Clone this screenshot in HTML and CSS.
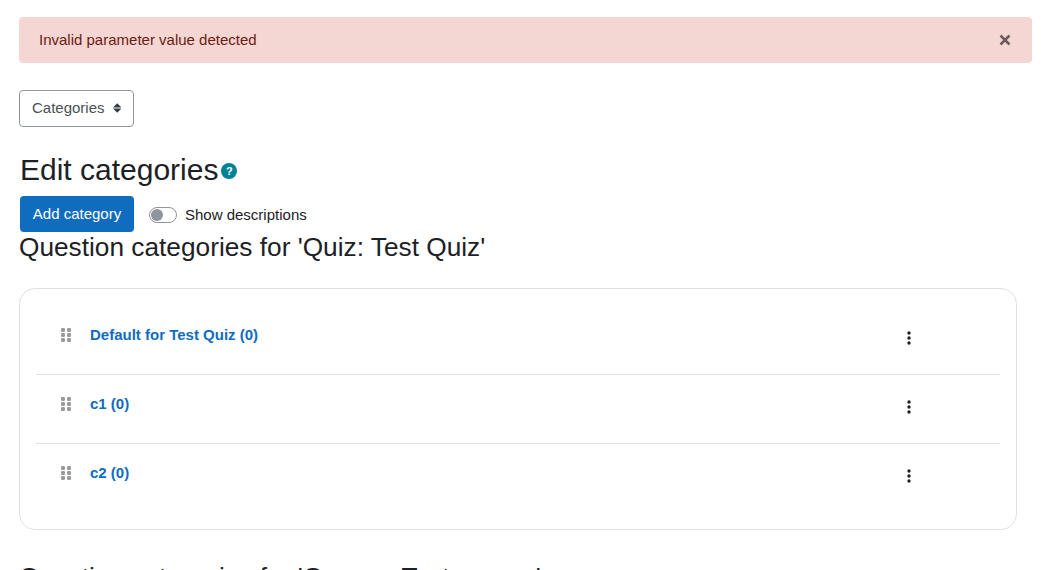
FILE: index.html
```html
<!DOCTYPE html>
<html lang="en">
<head>
<meta charset="utf-8">
<title>Edit categories</title>
<link rel="stylesheet" href="styles.css">
</head>
<body>
<main class="page">
  <div class="alert">
    <span>Invalid parameter value detected</span>
    <svg class="alert-close" width="12" height="12" viewBox="0 0 12 12"><path d="M1.5 1.5l9 9M10.500 1.500l-9 9"/></svg>
  </div>
  <button class="select" type="button">
    <span>Categories</span>
    <svg class="select-caret" width="9" height="12" viewBox="0 0 9 12"><path d="M4.500 1L9 5.500H0zM4.500 11L0 6.500h9z"/></svg>
  </button>
  <div class="title-row">
    <h2 class="title">Edit categories</h2>
    <span class="help">?</span>
  </div>
  <div class="actions">
    <button class="primary" type="button">Add category</button>
    <span class="toggle"><span class="toggle-knob"></span></span>
    <span class="toggle-label">Show descriptions</span>
  </div>
  <h3 class="section-title">Question categories for 'Quiz: Test Quiz'</h3>
  <section class="card">
    <div class="row">
      <svg class="grip" width="11" height="14" viewBox="0 0 11 14"><g><rect x="0" y="0" width="4" height="4" rx="1.200"/><rect x="6" y="0" width="4" height="4" rx="1.200"/><rect x="0" y="5" width="4" height="4" rx="1.200"/><rect x="6" y="5" width="4" height="4" rx="1.200"/><rect x="0" y="10" width="4" height="4" rx="1.200"/><rect x="6" y="10" width="4" height="4" rx="1.200"/></g></svg>
      <a class="row-link" href="#">Default for Test Quiz (0)</a>
      <svg class="kebab" width="4" height="14" viewBox="0 0 4 14"><circle cx="2" cy="2" r="1.700"/><circle cx="2" cy="7" r="1.700"/><circle cx="2" cy="12" r="1.700"/></svg>
    </div>
    <div class="row">
      <svg class="grip" width="11" height="14" viewBox="0 0 11 14"><g><rect x="0" y="0" width="4" height="4" rx="1.200"/><rect x="6" y="0" width="4" height="4" rx="1.200"/><rect x="0" y="5" width="4" height="4" rx="1.200"/><rect x="6" y="5" width="4" height="4" rx="1.200"/><rect x="0" y="10" width="4" height="4" rx="1.200"/><rect x="6" y="10" width="4" height="4" rx="1.200"/></g></svg>
      <a class="row-link" href="#">c1 (0)</a>
      <svg class="kebab" width="4" height="14" viewBox="0 0 4 14"><circle cx="2" cy="2" r="1.700"/><circle cx="2" cy="7" r="1.700"/><circle cx="2" cy="12" r="1.700"/></svg>
    </div>
    <div class="row">
      <svg class="grip" width="11" height="14" viewBox="0 0 11 14"><g><rect x="0" y="0" width="4" height="4" rx="1.200"/><rect x="6" y="0" width="4" height="4" rx="1.200"/><rect x="0" y="5" width="4" height="4" rx="1.200"/><rect x="6" y="5" width="4" height="4" rx="1.200"/><rect x="0" y="10" width="4" height="4" rx="1.200"/><rect x="6" y="10" width="4" height="4" rx="1.200"/></g></svg>
      <a class="row-link" href="#">c2 (0)</a>
      <svg class="kebab" width="4" height="14" viewBox="0 0 4 14"><circle cx="2" cy="2" r="1.700"/><circle cx="2" cy="7" r="1.700"/><circle cx="2" cy="12" r="1.700"/></svg>
    </div>
  </section>
  <h3 class="section-title section-next">Question categories for 'Course: Test course'</h3>
</main>
</body>
</html>
```

FILE: styles.css
```css
* { box-sizing: border-box; }
html, body { margin: 0; height: 570px; overflow: hidden; background: #fff; }
body { font-family: "Liberation Sans", Arial, sans-serif; color: #1d2125; }
.page { display: flex; flex-direction: column; align-items: flex-start; padding: 17px 10px 0 19px; }

.alert { width: 100%; height: 46px; display: flex; align-items: center; justify-content: space-between; padding: 0 21px 0 20px; background: #f4d6d2; border-radius: 4px; color: #6e1a12; font-size: 15px; }
.alert span { margin-bottom: 2px; }
.alert-close { stroke: #6d5a58; stroke-width: 2.500; fill: none; }

.select { margin-top: 27px; width: 115px; height: 37px; display: flex; align-items: center; gap: 8px; padding: 0 12px 2px; background: #fff; border: 1px solid #8f959e; border-radius: 4px; color: #495057; font: 15px "Liberation Sans", Arial, sans-serif; }
.select-caret { fill: #343a40; }

.title-row { margin-top: 26px; margin-left: 1px; display: flex; align-items: center; gap: 3px; height: 34px; }
.title { margin: 0; font-size: 30px; font-weight: 400; line-height: 34px; }
.help { width: 16px; height: 16px; margin-top: 1px; border-radius: 50%; background: #008196; color: #fff; font-size: 11px; font-weight: 700; line-height: 16px; text-align: center; }

.actions { margin-top: 9px; margin-left: 1px; display: flex; align-items: center; height: 36px; }
.primary { width: 114px; height: 36px; padding: 0 0 1px; background: #0f6cbf; border: 0; border-radius: 4px; color: #fff; font: 15px "Liberation Sans", Arial, sans-serif; }
.toggle { margin-left: 15px; margin-top: 2px; width: 28px; height: 16px; display: flex; align-items: center; padding-left: 1px; border: 1px solid #8f959e; border-radius: 8px; background: #fff; }
.toggle-knob { width: 12px; height: 12px; border-radius: 50%; background: #8f959e; }
.toggle-label { margin-left: 8px; margin-top: 1px; font-size: 15px; }

.section-title { margin: 0; font-size: 26.250px; font-weight: 400; line-height: 30px; }
.card { margin-top: 26px; width: 998px; height: 242px; padding: 16px 16px 16px; border: 1px solid #dee2e6; border-radius: 16px; }
.row { height: 69px; display: flex; align-items: flex-start; border-bottom: 1px solid #dee2e6; }
.row:first-child { height: 70px; }
.row:last-child { border-bottom: 0; }
.grip { margin: 23px 0 0 25px; fill: #9a9a9a; flex: none; }
.row-link { margin: 21px 0 0 18px; flex: 1; font-size: 15px; font-weight: 700; line-height: 18px; color: #0f6cbf; text-decoration: none; }
.kebab { margin: 26px 89px 0 0; fill: #1d2125; flex: none; }
.row:not(:first-child) .grip { margin-top: 22px; }
.row:not(:first-child) .row-link { margin-top: 20px; }
.row:not(:first-child) .kebab { margin-top: 25px; }
.section-next { margin-top: 32px; }
```
